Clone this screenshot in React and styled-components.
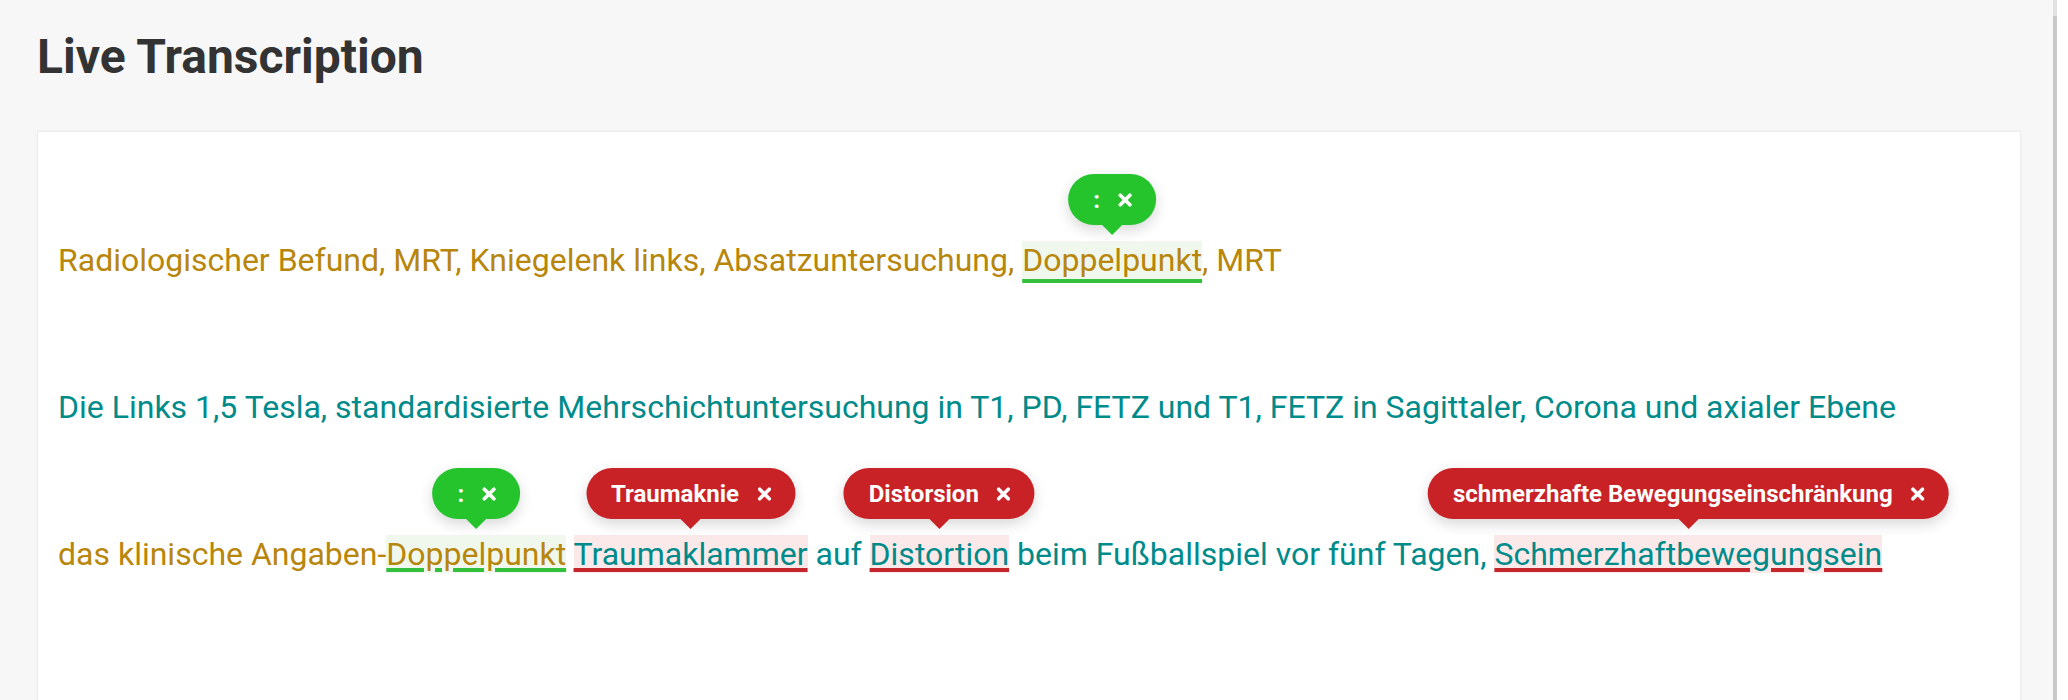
import React from 'react';
import styled, { createGlobalStyle } from 'styled-components';

const GlobalStyle = createGlobalStyle`
  html, body {
    margin: 0;
    padding: 0;
    background: #ffffff;
    font-family: Roboto, "Liberation Sans", sans-serif;
  }
`;

const Shell = styled.div`
  display: flex;
  height: 100vh;
  overflow: hidden;
`;

const Main = styled.main`
  flex: 1;
  display: flex;
  flex-direction: column;
  background: #f7f7f7;
  padding: 28px 32px 0 37px;
  min-width: 0;
  overflow: hidden;
`;

const Divider = styled.div`
  width: 4px;
  background: linear-gradient(#e2e2e2 0 16px, #c8c8c8 16px);
`;

const Gutter = styled.div`
  width: 11px;
  background: #ffffff;
`;

const Title = styled.h1`
  margin: 0;
  font-size: 48px;
  line-height: 58px;
  font-weight: 700;
  color: #333333;
`;

const Card = styled.section`
  flex: 1;
  margin: 45px 0 -20px;
  background: #ffffff;
  border: 1px solid #ececec;
  box-shadow: 0 0 4px rgba(0, 0, 0, 0.03);
  padding: 55px 20px 0 20px;
`;

const Row = styled.p`
  margin: 0;
  font-size: 32px;
  line-height: 147px;
  white-space: nowrap;
  color: ${p => (p.$tone === 'gold' ? '#b8860b' : '#008b8b')};
`;

const Gold = styled.span`
  color: #b8860b;
`;

const Teal = styled.span`
  color: #008b8b;
`;

const tones = {
  green: { main: '#25c42d', line: '#34c03c', soft: '#f0f8ee' },
  red: { main: '#c82126', line: '#c4262b', soft: '#fbe9ea' },
};

const Mark = styled.span`
  position: relative;
  background: ${p => tones[p.$tone].soft};
  text-decoration-line: underline;
  text-decoration-color: ${p => tones[p.$tone].line};
  text-decoration-thickness: 4px;
  text-underline-offset: ${p => p.$offset}px;
  text-decoration-skip-ink: auto;
`;

const Bubble = styled.span`
  position: absolute;
  left: 50%;
  bottom: calc(100% + 16px);
  transform: translateX(-50%);
  display: inline-flex;
  align-items: center;
  gap: 18px;
  height: 51px;
  padding: 0 24px 0 25px;
  border-radius: 26px;
  background: ${p => tones[p.$tone].main};
  color: #ffffff;
  font-size: 24px;
  font-weight: 700;
  line-height: 1;
  white-space: nowrap;
  box-shadow: 0 5px 14px rgba(0, 0, 0, 0.16);

  &::after {
    content: '';
    position: absolute;
    top: 100%;
    left: 50%;
    transform: translateX(-50%);
    border-left: 10px solid transparent;
    border-right: 10px solid transparent;
    border-top: 10px solid ${p => tones[p.$tone].main};
  }
`;

const Close = () => (
  <svg width="14" height="14" viewBox="0 0 14 14" aria-hidden="true">
    <path d="M2.2 2.2 L11.8 11.8 M11.8 2.2 L2.2 11.8" stroke="#fff" strokeWidth="3.6" strokeLinecap="round" />
  </svg>
);

const Annotated = ({ tone, label, offset, children }) => (
  <Mark $tone={tone} $offset={offset}>
    {children}
    <Bubble $tone={tone}>
      <span>{label}</span>
      <Close />
    </Bubble>
  </Mark>
);

export default function App() {
  return (
    <>
      <GlobalStyle />
      <Shell>
        <Main>
          <Title>Live Transcription</Title>
          <Card>
            <Row $tone="gold">
              Radiologischer Befund, MRT, Kniegelenk links, Absatzuntersuchung,{' '}
              <Annotated tone="green" label=":" offset={8}>Doppelpunkt</Annotated>, MRT
            </Row>
            <Row $tone="teal">
              Die Links 1,5 Tesla, standardisierte Mehrschichtuntersuchung in T1, PD, FETZ und T1, FETZ in Sagittaler, Corona und axialer Ebene
            </Row>
            <Row $tone="teal">
              <Gold>das klinische Angaben-</Gold>
              <Annotated tone="green" label=":" offset={3}><Gold>Doppelpunkt</Gold></Annotated>{' '}
              <Annotated tone="red" label="Traumaknie" offset={3}>Traumaklammer</Annotated>
              <Teal> auf </Teal>
              <Annotated tone="red" label="Distorsion" offset={3}>Distortion</Annotated>
              <Teal> beim Fußballspiel vor fünf Tagen, </Teal>
              <Annotated tone="red" label="schmerzhafte Bewegungseinschränkung" offset={3}>Schmerzhaftbewegungsein</Annotated>
            </Row>
          </Card>
        </Main>
        <Divider />
        <Gutter />
      </Shell>
    </>
  );
}
